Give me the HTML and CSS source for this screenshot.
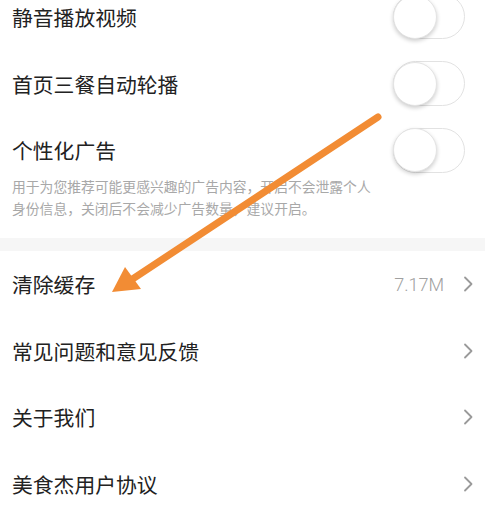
FILE: index.html
```html
<!DOCTYPE html>
<html lang="zh">
<head>
<meta charset="utf-8">
<link rel="stylesheet" href="styles.css">
</head>
<body>
<div class="page">
  <div class="row">
    <span class="title">静音播放视频</span>
    <span class="switch"><span class="knob"></span></span>
  </div>
  <div class="row">
    <span class="title">首页三餐自动轮播</span>
    <span class="switch"><span class="knob"></span></span>
  </div>
  <div class="ad">
    <div class="ad-head">
      <span class="title">个性化广告</span>
      <span class="switch"><span class="knob"></span></span>
    </div>
    <p class="desc">用于为您推荐可能更感兴趣的广告内容，开启不会泄露个人<br>身份信息，关闭后不会减少广告数量，建议开启。</p>
  </div>
  <div class="sep"></div>
  <div class="link">
    <span class="title">清除缓存</span>
    <span class="right"><span class="value">7.17M</span><svg class="chev" viewBox="0 0 10 16"><path d="M2 1.5 L8.5 8 L2 14.5"/></svg></span>
  </div>
  <div class="link">
    <span class="title">常见问题和意见反馈</span>
    <span class="right"><svg class="chev" viewBox="0 0 10 16"><path d="M2 1.5 L8.5 8 L2 14.5"/></svg></span>
  </div>
  <div class="link">
    <span class="title">关于我们</span>
    <span class="right"><svg class="chev" viewBox="0 0 10 16"><path d="M2 1.5 L8.5 8 L2 14.5"/></svg></span>
  </div>
  <div class="link">
    <span class="title">美食杰用户协议</span>
    <span class="right"><svg class="chev" viewBox="0 0 10 16"><path d="M2 1.5 L8.5 8 L2 14.5"/></svg></span>
  </div>
</div>
<svg class="arrow" viewBox="0 0 485 507" width="485" height="507">
  <line x1="378" y1="117" x2="128" y2="282"/>
  <polygon points="112,292 125,267 141,289"/>
</svg>
</body>
</html>
```
FILE: styles.css
```css
html, body {
  margin: 0;
  padding: 0;
  background: #ffffff;
  overflow: hidden;
}
body {
  width: 485px;
  height: 507px;
  position: relative;
  font-family: "Noto Sans CJK SC", "Noto Sans", sans-serif;
  color: #222222;
}
.page {
  margin-top: -17px;
}
.row {
  height: 67px;
  display: flex;
  align-items: center;
  justify-content: space-between;
  padding: 0 20px 0 12px;
}
.title {
  font-size: 20.8px;
  line-height: 32px;
  color: #222222;
}
.switch {
  width: 72px;
  height: 45px;
  box-sizing: border-box;
  border: 1px solid #e2e2e2;
  border-radius: 23px;
  background: #ffffff;
  display: flex;
  align-items: center;
  position: relative;
}
.knob {
  width: 44px;
  height: 44px;
  box-sizing: border-box;
  border-radius: 50%;
  background: #ffffff;
  border: 1px solid #e4e4e4;
  box-shadow: 0 2px 4px rgba(0, 0, 0, 0.2);
  margin-left: -1px;
}
.ad {
  padding: 17px 20px 19px 12px;
}
.ad-head {
  height: 32px;
  display: flex;
  align-items: center;
  justify-content: space-between;
}
.desc {
  margin: 9px 0 0 0;
  font-size: 13.8px;
  line-height: 22px;
  color: #a8a8a8;
  white-space: nowrap;
}
.sep {
  height: 13px;
  background: #f6f6f6;
}
.link {
  height: 66.5px;
  display: flex;
  align-items: center;
  justify-content: space-between;
  padding: 0 12px 0 12px;
}
.link:first-of-type {
  height: 65px;
}
.right {
  display: flex;
  align-items: center;
  gap: 19px;
}
.value {
  font-family: "Roboto", "Noto Sans", sans-serif;
  font-size: 18px;
  color: #a0a0a0;
  font-weight: 300;
}
.chev {
  width: 10px;
  height: 16px;
  fill: none;
  stroke: #9a9a9a;
  stroke-width: 1.8;
  stroke-linecap: round;
  stroke-linejoin: round;
}
.arrow {
  position: absolute;
  left: 0;
  top: 0;
  pointer-events: none;
}
.arrow line {
  stroke: #f28c34;
  stroke-width: 7;
  stroke-linecap: round;
}
.arrow polygon {
  fill: #f28c34;
}
```
